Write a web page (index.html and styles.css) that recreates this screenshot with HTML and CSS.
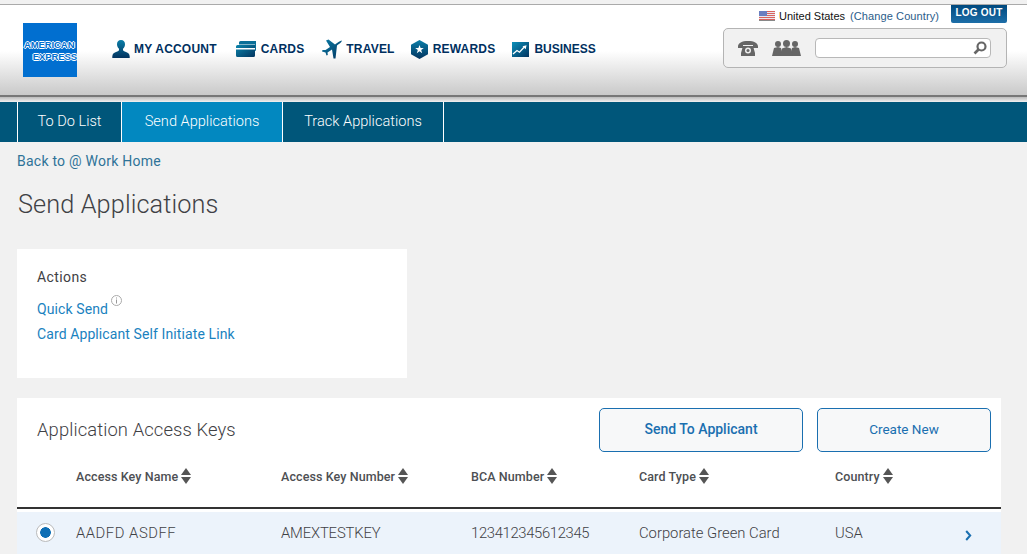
FILE: index.html
```html
<!DOCTYPE html>
<html lang="en">
<head>
<meta charset="utf-8">
<title>Send Applications</title>
<link rel="stylesheet" href="styles.css">
</head>
<body>
<header class="masthead">
  <div class="logo"><span class="logo-line">AMERICAN</span><span class="logo-line logo-second">EXPRESS</span></div>
  <nav class="main-nav">
    <a class="main-item item-account"><svg width="18" height="18" viewBox="0 0 18 18"><defs><linearGradient id="g1" x1="0" y1="0" x2="0" y2="1"><stop offset="0" stop-color="#0a7ea8"/><stop offset="1" stop-color="#03345f"/></linearGradient></defs><path fill="url(#g1)" d="M9 0c2.600 0 4 1.800 4 4.200 0 2-1 3.600-2 4.500v1.300c0 .8 1 1.200 3 1.900 2.300.8 3.500 1.800 3.700 4.600V18H.3v-1.500c.2-2.800 1.400-3.800 3.700-4.600 2-.7 3-1.100 3-1.900V8.700C6 7.800 5 6.200 5 4.200 5 1.800 6.400 0 9 0z"/></svg>MY ACCOUNT</a>
    <a class="main-item item-cards"><svg width="20" height="16" viewBox="0 0 20 16"><defs><linearGradient id="g2" x1="0" y1="0" x2="1" y2="1"><stop offset="0" stop-color="#0b86ad"/><stop offset="1" stop-color="#03345f"/></linearGradient></defs><path fill="#0a6f98" d="M3 1.500Q3 0 4.500 0H20v9q0 1-1 1V3.500H3z"/><path fill="url(#g2)" d="M0 5.500Q0 4 1.500 4H19v3H0zM0 8.500h19v6q0 1.500-1.500 1.500h-16Q0 16 0 14.500z"/></svg>CARDS</a>
    <a class="main-item item-travel"><svg width="21" height="20" viewBox="0 0 21 20"><defs><linearGradient id="g3" x1="0" y1="0" x2="1" y2="1"><stop offset="0" stop-color="#0b7ea8"/><stop offset="1" stop-color="#03345f"/></linearGradient></defs><path fill="url(#g3)" d="M20 1.500C19.500 3.500 17 5 15 6.500L13.500 19.500H11.500L10 10.500 5.500 13.500 5.800 16 4.500 16.500 3.500 13.500 0 12.500 .5 11H3.500L8 8 4 1.500 6.500 .5 13 5.500C15 4 18 1.500 20 1.500z"/></svg>TRAVEL</a>
    <a class="main-item item-rewards"><svg width="17" height="19" viewBox="0 0 17 19"><defs><linearGradient id="g4" x1="0" y1="0" x2="0" y2="1"><stop offset="0" stop-color="#0a7ea8"/><stop offset="1" stop-color="#03345f"/></linearGradient></defs><path fill="url(#g4)" d="M8.500 0 17 4.700v9.600L8.500 19 0 14.300V4.700z"/><path fill="#fff" d="m8.500 5 1.100 3h3.200l-2.600 2 1 3.200-2.700-1.900-2.700 1.900 1-3.200-2.600-2h3.200z"/></svg>REWARDS</a>
    <a class="main-item item-business"><svg width="17" height="15" viewBox="0 0 17 15"><defs><linearGradient id="g5" x1="0" y1="0" x2="1" y2="1"><stop offset="0" stop-color="#0b90ba"/><stop offset="1" stop-color="#03345f"/></linearGradient></defs><rect width="17" height="15" fill="url(#g5)"/><path fill="none" stroke="#fff" stroke-width="1.300" d="m1 12 4-3.500 2.500 1.700 4.500-5"/><path fill="#fff" d="m10.500 4.200 4-1-.8 4z"/></svg>BUSINESS</a>
  </nav>
  <div class="utility">
    <div class="utility-top">
      <svg class="flag" width="16" height="10" viewBox="0 0 16 10"><rect width="16" height="10" fill="#e8e8ee"/><path fill="#d9635f" d="M0 0h16v1H0zM0 2h16v1H0zM0 4h16v1H0zM0 6h16v1H0zM0 8h16v1H0z"/><rect width="8" height="5" fill="#6a7fc0"/><rect x="0" y="9" width="16" height="1" fill="#888"/></svg>
      <span class="country">United States</span>
      <a class="change">(Change Country)</a>
      <a class="logout">LOG OUT</a>
    </div>
    <div class="tools">
      <svg class="phone" width="20" height="15" viewBox="0 0 20 15"><path fill="#666" d="M0 5.500C0 2 4 0 10 0s10 2 10 5.500V7h-5V4H5v3H0z"/><path fill="#666" d="M5 5h10l2 7v3H3v-3z"/><circle cx="10" cy="9.500" r="3" fill="#f0f0f0"/><circle cx="10" cy="9.500" r="1.500" fill="#666"/></svg>
      <svg class="people" width="29" height="16" viewBox="0 0 29 16"><g fill="#666"><circle cx="6" cy="4" r="3"/><path d="M0 16 2 8l4-1 3 1 2 8z"/><circle cx="23" cy="4" r="3"/><path d="m18 16 2-8 3-1 4 1 2 8z"/><circle cx="14.500" cy="3.500" r="3.500"/><path d="m8 16 2-7.500 4.500-1.500 4.500 1.500L21 16z"/></g></svg>
      <div class="search">
        <svg width="14" height="14" viewBox="0 0 14 14"><circle cx="8.500" cy="5.500" r="4" fill="none" stroke="#666" stroke-width="2.200"/><path stroke="#666" stroke-width="2.600" d="M5.500 8.500 1.500 12.500"/></svg>
      </div>
    </div>
  </div>
</header>
<div class="rule-gap"></div>
<nav class="tabs">
  <a class="tab tab-todo">To Do List</a>
  <a class="tab tab-send active">Send Applications</a>
  <a class="tab tab-track">Track Applications</a>
</nav>
<main class="content">
  <a class="back">Back to @ Work Home</a>
  <h1 class="title">Send Applications</h1>
  <section class="actions">
    <h2 class="actions-title">Actions</h2>
    <div class="quick"><a class="link">Quick Send</a><svg class="info" width="11" height="11" viewBox="0 0 11 11"><circle cx="5.500" cy="5.500" r="5" fill="none" stroke="#aaa"/><path stroke="#999" d="M5.500 4.500v4M5.500 2.500v1"/></svg></div>
    <a class="link self-link">Card Applicant Self Initiate Link</a>
  </section>
  <section class="keys">
    <div class="keys-head">
      <h2 class="keys-title">Application Access Keys</h2>
      <a class="btn btn-send">Send To Applicant</a>
      <a class="btn btn-create">Create New</a>
    </div>
    <div class="grid grid-head">
      <span></span>
      <span class="th">Access Key Name<i class="sort"></i></span>
      <span class="th">Access Key Number<i class="sort"></i></span>
      <span class="th">BCA Number<i class="sort"></i></span>
      <span class="th">Card Type<i class="sort"></i></span>
      <span class="th">Country<i class="sort"></i></span>
      <span></span>
    </div>
    <div class="grid grid-row">
      <span class="radio"></span>
      <span class="cell-name">AADFD ASDFF</span>
      <span class="cell-key">AMEXTESTKEY</span>
      <span class="cell-num">123412345612345</span>
      <span>Corporate Green Card</span>
      <span>USA</span>
      <svg class="chevron" width="7" height="11" viewBox="0 0 7 11"><path fill="none" stroke="#1a6fb0" stroke-width="2" d="m1.200 1 4 4.500-4 4.500"/></svg>
    </div>
  </section>
</main>
</body>
</html>
```
FILE: styles.css
```css
* { box-sizing: border-box; }
html, body { margin: 0; padding: 0; height: 554px; overflow: hidden; }
body { background: #f1f1f1; font-family: "Roboto", "Liberation Sans", sans-serif; color: #4d4f53; }
a { text-decoration: none; }

.masthead {
  height: 93px;
  margin-top: 4px;
  border-top: 1px solid #aaa;
  border-bottom: 2px solid #777;
  background: linear-gradient(#fff 0, #fff 46px, #c9c9c9 100%);
  display: flex;
  font-family: "Liberation Sans", Arial, sans-serif;
}
.logo {
  width: 54px; height: 54px;
  margin: 18px 0 0 23px;
  background: #016fd0;
  color: #016fd0;
  text-shadow: 1px 0 #fff, -1px 0 #fff, 0 1px #fff, 0 -1px #fff;
  font-size: 9.500px;
  font-weight: 700;
  line-height: 12px;
  display: flex; flex-direction: column;
  padding: 16px 0 0 1px;
  flex: none;
  letter-spacing: -.1px;
}
.logo-line { display: block; }
.logo-second { text-align: right; }
.main-nav { display: flex; align-items: center; height: 18px; margin: 35px 0 0 35px; flex: none; }
.main-item {
  display: flex; align-items: center;
  color: #00305f;
  font-size: 12px; font-weight: 700;
  letter-spacing: .2px;
  white-space: nowrap;
}
.main-item svg { flex: none; margin-right: 5px; }
.item-account svg { margin-right: 4px; }
.item-cards { margin-left: 19px; }
.item-travel { margin-left: 18px; }
.item-travel svg { margin-right: 3px; }
.item-rewards { margin-left: 16px; }
.item-business { margin-left: 17px; letter-spacing: 0; }

.utility { margin-left: auto; margin-right: 20px; width: 284px; flex: none; }
.utility-top { display: flex; align-items: flex-start; height: 23px; font-size: 11px; }
.flag { margin: 6px 4px 0 36px; flex: none; }
.country { color: #111; margin-top: 5px; white-space: nowrap; }
.change { color: #2b5c8a; margin: 5px 0 0 5px; white-space: nowrap; font-size: 11px; letter-spacing: .1px; }
.logout {
  margin-left: auto;
  width: 56px; height: 18px;
  background: linear-gradient(#00497e, #1d6ea8);
  border-radius: 0 0 2px 2px;
  color: #fff;
  font-size: 10px; font-weight: 700;
  text-align: center; line-height: 16px;
  white-space: nowrap;
  letter-spacing: .2px;
}
.tools {
  height: 40px;
  border: 1px solid #b4b4b4;
  border-radius: 5px;
  background: #f1f1f1;
  display: flex; align-items: center;
  padding-left: 14px;
}
.phone { flex: none; }
.people { flex: none; margin-left: 14px; }
.search {
  width: 176px; height: 20px;
  margin-left: 14px;
  border: 1px solid #b8b8b8;
  border-radius: 4px;
  background: #fff;
  display: flex; align-items: center; justify-content: flex-end;
  padding-right: 3px;
}

.rule-gap { height: 5px; background: linear-gradient(#bbb, #f1f1f1); }
.tabs { height: 40px; background: #00567a; display: flex; padding-left: 17px; }
.tab {
  display: block; height: 40px;
  border-left: 1px solid #fff;
  color: #fff;
  font-size: 14.600px; font-weight: 300;
  line-height: 39px;
  text-align: center;
  white-space: nowrap;
}
.tab-todo { width: 104px; }
.tab-send { width: 161px; }
.tab-track { width: 162px; border-right: 1px solid #fff; }
.active { background: #0288c0; }

.content { padding: 0 26px 0 17px; }
.back { display: block; margin-top: 10px; color: #2f7398; font-size: 14px; font-weight: 400; line-height: 18px; letter-spacing: .24px; }
.title { margin: 19px 0 0 1px; font-size: 25.300px; line-height: 32px; font-weight: 300; color: #3f4145; letter-spacing: .1px; }
.actions { width: 390px; height: 129px; margin-top: 28px; background: #fff; padding: 19px 20px 0; }
.actions-title { margin: 0; font-size: 14px; line-height: 18px; font-weight: 400; color: #3f4145; letter-spacing: .4px; }
.quick { display: flex; align-items: flex-start; margin-top: 14px; }
.link { display: block; color: #1a82c0; font-size: 14px; line-height: 18px; white-space: nowrap; letter-spacing: .1px; }
.info { margin: -5px 0 0 3px; flex: none; }
.self-link { margin-top: 7px; }

.keys { width: 984px; margin-top: 20px; background: #fff; }
.keys-head { display: flex; align-items: center; height: 60px; padding: 4px 10px 0 20px; }
.keys-title { margin: 0 auto 0 0; font-size: 18.400px; font-weight: 300; line-height: 24px; color: #3f4145; letter-spacing: .1px; }
.btn {
  display: block; height: 44px; line-height: 41px;
  border: 1px solid #1a6fb0;
  border-radius: 5px;
  background: #f7f8f9;
  color: #1a6fb0;
  text-align: center;
  font-size: 13.500px;
  flex: none;
}
.btn-send { width: 204px; margin-right: 14px; font-size: 14px; font-weight: 500; }
.btn-create { width: 174px; }
.grid { display: grid; grid-template-columns: 59px 205px 190px 168px 196px 122px 44px; align-items: center; }
.grid-head { height: 51px; padding-bottom: 13px; border-bottom: 2px solid #333; margin-bottom: 3px; }
.th { font-size: 12.500px; font-weight: 500; letter-spacing: .1px; color: #4d4f53; display: flex; align-items: center; white-space: nowrap; }
.sort { display: inline-block; width: 11px; height: 16px; margin-left: 3px; flex: none; position: relative; }
.sort::before, .sort::after {
  content: ""; position: absolute; left: 0;
  border-left: 5.500px solid transparent;
  border-right: 5.500px solid transparent;
}
.sort::before { top: 0; border-bottom: 7px solid #555; }
.sort::after { bottom: 0; border-top: 7px solid #555; }
.grid-row { height: 43px; padding-bottom: 2px; background: #ecf3fb; font-size: 14.800px; font-weight: 300; color: #3f4145; white-space: nowrap; }
.cell-name { letter-spacing: .55px; }
.cell-key { letter-spacing: -.15px; }
.cell-num { letter-spacing: -.33px; }
.radio {
  width: 19px; height: 19px; margin-left: 19px;
  border: 1px solid #bbb; border-radius: 50%;
  background: radial-gradient(circle, #0f6fb5 0, #0f6fb5 5px, #fff 5.600px);
}
.chevron { margin-left: 8px; margin-top: 5px; }
```
